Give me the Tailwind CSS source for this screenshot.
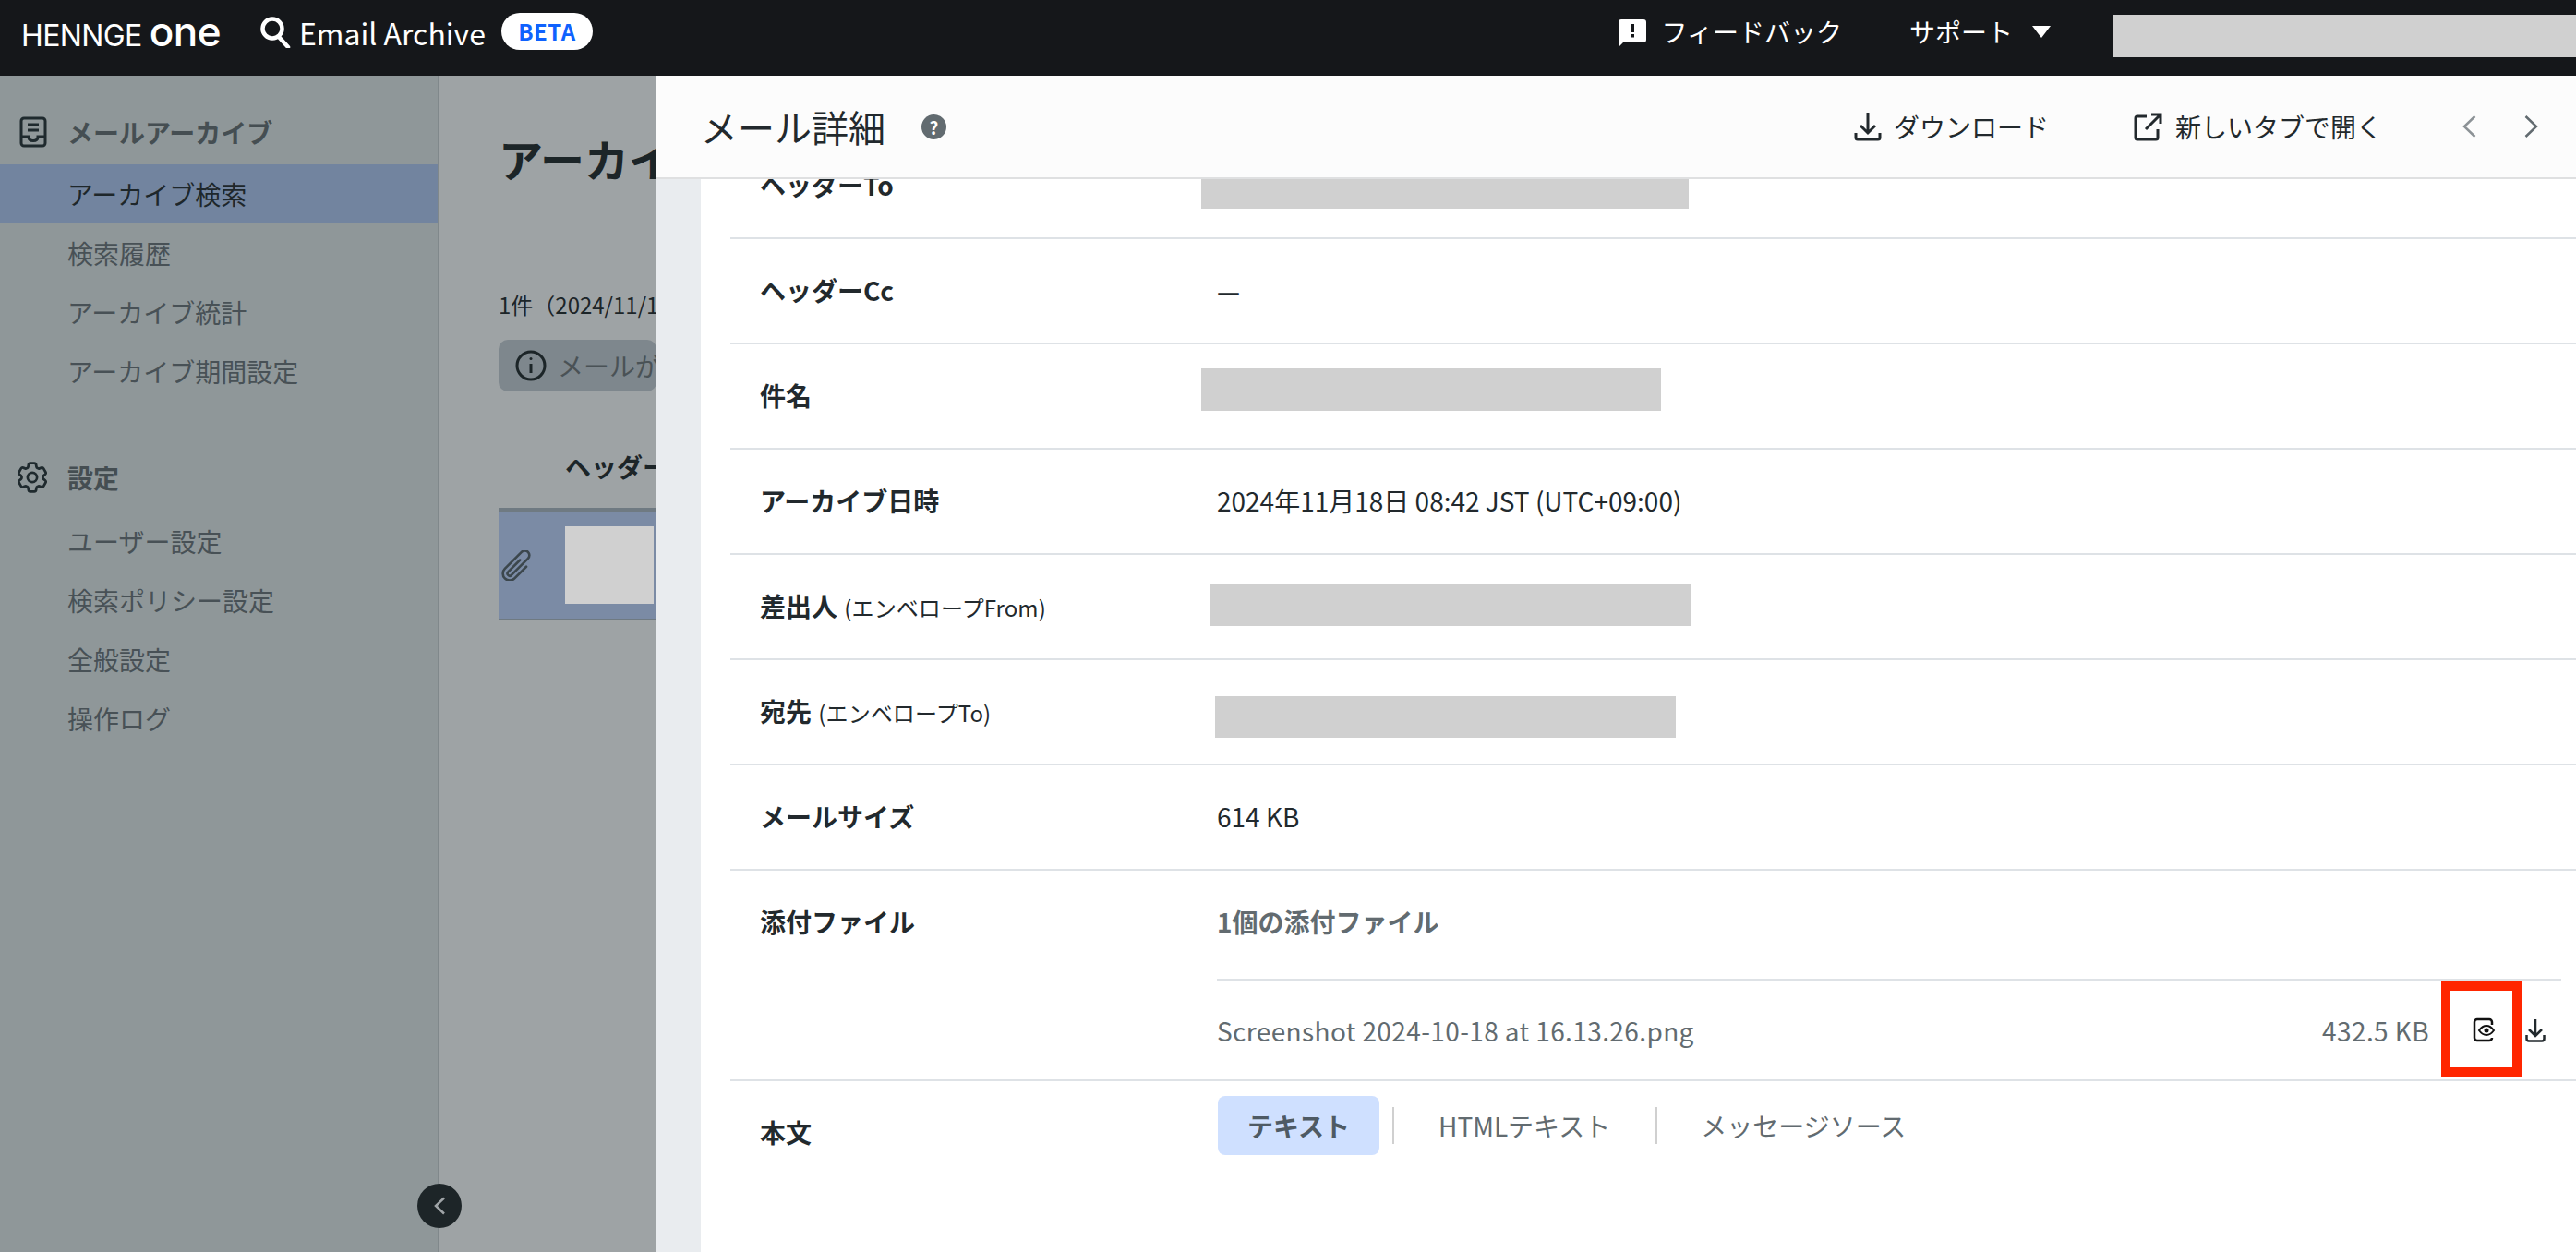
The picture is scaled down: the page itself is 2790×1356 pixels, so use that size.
<!DOCTYPE html>
<html lang="ja">

<head>
  <meta charset="UTF-8">
  <meta name="viewport" content="width=device-width, initial-scale=1.0">
  <script src="https://cdn.jsdelivr.net/npm/@tailwindcss/browser@4"></script>
  <title>Email Archive</title>
</head>

<body class="w-[2790px] h-[1356px] overflow-hidden bg-[#9ea3a5] font-['Noto_Sans_CJK_JP','Noto_Sans',sans-serif] text-[28px] text-[#22292d]">

  <!-- top bar -->
  <header class="h-[82px] bg-[#15171a] flex items-start text-white">
    <div class="w-[258px] pl-[23px] pt-[10px] h-[68px] flex items-baseline whitespace-nowrap font-['Inter',sans-serif] leading-[48px]">
      <span class="text-[32px] tracking-[-0.6px]">HENNGE</span>
      <span class="text-[44px] ml-[8px] font-medium tracking-[-0.5px]">one</span>
    </div>
    <svg class="w-[34px] h-[35px] mt-[17px] ml-[23px]" viewBox="0 0 34 35" fill="none" stroke="#fff" stroke-width="4.500"><circle cx="14" cy="14" r="10.500"/><path d="M21 23l10 11" stroke-linecap="round"/></svg>
    <span class="ml-[9px] mt-[14px] text-[32px] leading-[42px] whitespace-nowrap">Email Archive</span>
    <span class="ml-[17px] mt-[14px] w-[99px] h-[40px] rounded-full bg-white text-[#0f62fe] text-[24px] font-bold flex items-center justify-center tracking-[0.5px]">BETA</span>
    <div class="ml-auto flex items-center h-[68px]">
      <svg class="w-[30px] h-[30px] mt-[4px]" viewBox="0 0 30 30"><path fill="#fff" d="M3 0h24a3 3 0 0 1 3 3v19a3 3 0 0 1-3 3H5l-5 5V3a3 3 0 0 1 3-3z"/><rect x="13.500" y="5" width="3.500" height="9" fill="#15171a"/><rect x="13.500" y="16" width="3.500" height="3.500" fill="#15171a"/></svg>
      <span class="ml-[17px] whitespace-nowrap">フィードバック</span>
      <span class="ml-[73px] whitespace-nowrap">サポート</span>
      <svg class="ml-[21px] w-[20px] h-[13px]" viewBox="0 0 20 13"><path fill="#fff" d="M0 0h20L10 13z"/></svg>
      <div class="ml-[68px] mt-[10px] w-[501px] h-[46px] bg-[#d0d0d0]"></div>
    </div>
  </header>

  <div class="flex h-[1274px] relative">
    <!-- sidebar -->
    <aside class="w-[476px] shrink-0 bg-[#8f9799] border-r-2 border-[#80888b] pt-[29px] text-[#485156]">
      <div class="h-[67px] pb-[3px] flex items-center font-bold text-[#454e52]">
        <svg class="ml-[21px] mr-[22px] w-[30px] h-[34px]" viewBox="0 0 30 34" fill="none" stroke="#1f2a2e" stroke-width="3"><rect x="2" y="2" width="26" height="30" rx="3"/><path d="M9 9h12M9 15h12M2 22h8c0 3 2 4.500 5 4.500s5-1.500 5-4.500h8"/></svg>
        メールアーカイブ
      </div>
      <a class="h-16 flex items-center pl-[73px] bg-[#72849f] text-[#1e272b]">アーカイブ検索</a>
      <a class="h-16 flex items-center pl-[73px]">検索履歴</a>
      <a class="h-16 flex items-center pl-[73px]">アーカイブ統計</a>
      <a class="h-16 flex items-center pl-[73px]">アーカイブ期間設定</a>

      <div class="mt-[51px] h-[69px] pb-[5px] flex items-center font-bold text-[#454e52]">
        <svg class="ml-[18px] mr-[21px] w-[34px] h-[34px]" viewBox="2 2 20 20" fill="none" stroke="#1f2a2e" stroke-width="1.600"><path d="M9.594 3.940c.09-.542.56-.94 1.110-.94h2.593c.55 0 1.020.398 1.110.94l.213 1.281c.063.374.313.686.645.87.074.04.147.083.22.127.325.196.72.257 1.075.124l1.217-.456a1.125 1.125 0 0 1 1.370.49l1.296 2.247a1.125 1.125 0 0 1-.26 1.431l-1.003.827c-.293.241-.438.613-.43.992a7.723 7.723 0 0 1 0 .255c-.008.378.137.75.43.991l1.004.827c.424.35.534.955.26 1.430l-1.298 2.247a1.125 1.125 0 0 1-1.369.491l-1.217-.456c-.355-.133-.75-.072-1.076.124a6.470 6.470 0 0 1-.22.128c-.331.183-.581.495-.644.869l-.213 1.281c-.09.543-.56.94-1.110.94h-2.594c-.55 0-1.019-.398-1.110-.94l-.213-1.281c-.062-.374-.312-.686-.644-.87a6.520 6.520 0 0 1-.22-.127c-.325-.196-.72-.257-1.076-.124l-1.217.456a1.125 1.125 0 0 1-1.369-.49l-1.297-2.247a1.125 1.125 0 0 1 .26-1.431l1.004-.827c.292-.24.437-.613.43-.991a6.932 6.932 0 0 1 0-.255c.007-.38-.138-.751-.43-.992l-1.004-.827a1.125 1.125 0 0 1-.26-1.430l1.297-2.247a1.125 1.125 0 0 1 1.370-.491l1.216.456c.356.133.751.072 1.076-.124.072-.044.146-.086.22-.128.332-.183.582-.495.644-.869l.214-1.280Z"/><circle cx="12" cy="12" r="3"/></svg>
        設定
      </div>
      <a class="h-16 flex items-center pl-[73px]">ユーザー設定</a>
      <a class="h-16 flex items-center pl-[73px]">検索ポリシー設定</a>
      <a class="h-16 flex items-center pl-[73px]">全般設定</a>
      <a class="h-16 flex items-center pl-[73px]">操作ログ</a>
    </aside>

    <!-- page behind the drawer -->
    <main class="w-[235px] shrink-0 pl-[64px] whitespace-nowrap overflow-hidden">
      <h1 class="mt-[53px] text-[48px] leading-[72px] font-bold text-[#1c2528]">アーカイブ検索</h1>
      <p class="mt-[105px] text-[24px] leading-[36px] text-[#1c2528]">1件（2024/11/18 08:42）</p>
      <div class="mt-[20px] h-[56px] bg-[#7e878d] rounded-[10px] flex items-center pl-[18px] text-[#4a5256]">
        <svg class="w-[34px] h-[34px] mr-[12px] shrink-0" viewBox="0 0 34 34" fill="none" stroke="#1c2528" stroke-width="3"><circle cx="17" cy="17" r="15"/><path d="M17 15v10"/><circle cx="17" cy="9.500" r="1.500" fill="#1c2528" stroke="none"/></svg>
        <span class="shrink-0">メールが見つかりました</span>
      </div>
      <div class="mt-[60px] pl-[72px] font-bold text-[#1c2528] leading-[42px]">ヘッダーFrom</div>
      <div class="mt-[24px] h-[122px] bg-[#7b8ba5] border-t-4 border-b-2 border-[#6f7a82] flex items-center pl-[3px]">
        <svg class="w-[33px] h-[33px] shrink-0" viewBox="3 2 18 20" fill="none" stroke="#3c474d" stroke-width="1.600" stroke-linecap="round"><path d="m18.375 12.739-7.693 7.693a4.500 4.500 0 0 1-6.364-6.364l10.940-10.940A3 3 0 1 1 19.500 7.372L8.552 18.320m.009-.01-.01.01m5.699-9.941-7.810 7.810a1.500 1.500 0 0 0 2.112 2.130"/></svg>
        <div class="ml-[36px] w-[96px] h-[84px] shrink-0 bg-[#d0d0d0]"></div>
        <div class="ml-[2px] text-[24px] leading-[42px] text-[#1c2528] shrink-0">T<br>C</div>
      </div>
    </main>

    <button class="absolute left-[452px] top-[1200px] w-[48px] h-[48px] rounded-full bg-[#1d2528] flex items-center justify-center">
      <svg class="w-[12px] h-[20px]" viewBox="0 0 12 20" fill="none" stroke="#a0a5a8" stroke-width="2.500"><path d="M11 1.500 2 10l9 8.500"/></svg>
    </button>

    <!-- drawer -->
    <section class="absolute left-[711px] top-0 w-[2079px] h-full bg-[#e9ecef] flex flex-col">
      <div class="relative z-10 h-[112px] shrink-0 bg-[#fcfcfc] border-b-2 border-[#dfe0e1] flex items-center pl-[48px]">
        <h2 class="text-[40px] leading-[60px]">メール詳細</h2>
        <span class="ml-[39px] w-[27px] h-[27px] rounded-full bg-[#626b70] text-white text-[19px] font-bold flex items-center justify-center leading-none">?</span>
        <svg class="ml-auto w-[30px] h-[32px]" viewBox="0 0 30 32" fill="none" stroke="#22292d" stroke-width="3"><path d="M15 1v21M7 15l8 8 8-8M2 23v5a2 2 0 0 0 2 2h22a2 2 0 0 0 2-2v-5"/></svg>
        <span class="ml-[13px] whitespace-nowrap">ダウンロード</span>
        <svg class="ml-[92px] w-[31px] h-[31px]" viewBox="0 0 31 31" fill="none" stroke="#22292d" stroke-width="3"><path d="M14 4H4a2 2 0 0 0-2 2v21a2 2 0 0 0 2 2h20a2 2 0 0 0 2-2V18M19 2h10v10M29 2 13 18"/></svg>
        <span class="ml-[14px] whitespace-nowrap">新しいタブで開く</span>
        <svg class="ml-[87px] w-[15px] h-[24px]" viewBox="0 0 15 24" fill="none" stroke="#8c9296" stroke-width="2.500"><path d="M13.500 1 2 12l11.500 11"/></svg>
        <svg class="ml-[52px] mr-[41px] w-[15px] h-[24px]" viewBox="0 0 15 24" fill="none" stroke="#626b70" stroke-width="2.500"><path d="M1.500 1 13 12 1.500 23"/></svg>
      </div>

      <div class="ml-[48px] flex-1 bg-white pl-[32px] overflow-hidden">
        <div class="-mt-[49px]">
          <div class="h-[114px] pb-[2px] border-b-2 border-[#dee2e6] flex items-center">
            <div class="w-[527px] shrink-0 pl-[32px] font-bold">ヘッダーTo</div>
            <div class="w-[528px] h-[32px] bg-[#d0d0d0] self-start mt-[49px] -ml-[17px]"></div>
          </div>
          <div class="h-[114px] pb-[2px] border-b-2 border-[#dee2e6] flex items-center">
            <div class="w-[527px] shrink-0 pl-[32px] font-bold">ヘッダーCc</div>
            <div>—</div>
          </div>
          <div class="h-[114px] pb-[2px] border-b-2 border-[#dee2e6] flex items-center">
            <div class="w-[527px] shrink-0 pl-[32px] font-bold">件名</div>
            <div class="w-[498px] h-[46px] bg-[#d0d0d0] -ml-[17px] -mt-[12px]"></div>
          </div>
          <div class="h-[114px] pb-[2px] border-b-2 border-[#dee2e6] flex items-center">
            <div class="w-[527px] shrink-0 pl-[32px] font-bold">アーカイブ日時</div>
            <div>2024年11月18日 08:42 JST (UTC+09:00)</div>
          </div>
          <div class="h-[114px] pb-[2px] border-b-2 border-[#dee2e6] flex items-center">
            <div class="w-[527px] shrink-0 pl-[32px] font-bold">差出人 <span class="ml-[1px] text-[24px] font-normal tracking-[0.1px]">(エンベロープFrom)</span></div>
            <div class="w-[520px] h-[45px] bg-[#d0d0d0] -ml-[7px] -mt-[2px]"></div>
          </div>
          <div class="h-[114px] pb-[2px] border-b-2 border-[#dee2e6] flex items-center">
            <div class="w-[527px] shrink-0 pl-[32px] font-bold">宛先 <span class="ml-[1px] text-[24px] font-normal tracking-[0.1px]">(エンベロープTo)</span></div>
            <div class="w-[499px] h-[45px] bg-[#d0d0d0] -ml-[2px] mt-[12px]"></div>
          </div>
          <div class="h-[114px] pb-[2px] border-b-2 border-[#dee2e6] flex items-center">
            <div class="w-[527px] shrink-0 pl-[32px] font-bold">メールサイズ</div>
            <div>614 KB</div>
          </div>
          <div class="h-[228px] border-b-2 border-[#dee2e6] flex">
            <div class="w-[527px] shrink-0 pl-[32px] pt-[34px] font-bold">添付ファイル</div>
            <div class="flex-1 text-[#626b70]">
              <div class="h-[119px] mr-[16px] border-b-2 border-[#dee2e6] pt-[34px] font-bold">1個の添付ファイル</div>
              <div class="h-[107px] flex items-center">
                <span class="tracking-[0.4px]">Screenshot 2024-10-18 at 16.13.26.png</span>
                <span class="ml-auto tracking-[0.4px]">432.5 KB</span>
                <span class="relative w-[25px] h-[27px] ml-[47px]">
                  <svg class="w-[25px] h-[27px]" viewBox="0 0 25 27" fill="none" stroke="#111" stroke-width="2.500"><path d="M21 8V5a3 3 0 0 0-3-3H5a3 3 0 0 0-3 3v17a3 3 0 0 0 3 3h13a3 3 0 0 0 3-3"/><path d="M7 14c2.500-3.500 5-5 8-5s5.500 1.500 8 5c-2.500 3.500-5 5-8 5s-5.500-1.500-8-5z" stroke-width="2"/><circle cx="15" cy="14" r="2.500" fill="#111" stroke="none"/></svg>
                  <span class="absolute -left-[34px] -top-[39px] w-[87px] h-[103px] border-[10px] border-[#ff2600]"></span>
                </span>
                <svg class="ml-[32px] mr-[33px] w-[22px] h-[26px]" viewBox="0 0 22 26" fill="none" stroke="#22292d" stroke-width="2.500"><path d="M11 1v17M4 12l7 7 7-7M1.500 18v4a2.500 2.500 0 0 0 2.500 2.500h14a2.500 2.500 0 0 0 2.500-2.500v-4"/></svg>
              </div>
            </div>
          </div>
          <div class="flex">
            <div class="w-[527px] shrink-0 pl-[32px] pt-[34px] font-bold">本文</div>
            <div class="pt-[15px] flex items-center text-[#626b70] h-[80px]">
              <span class="ml-[1px] w-[175px] h-[64px] rounded-[8px] bg-[#cfe0ff] text-[#4e5a64] font-bold flex items-center justify-center">テキスト</span>
              <span class="ml-[14px] w-[2px] h-[40px] bg-[#d0d0d0]"></span>
              <span class="ml-[48px]">HTMLテキスト</span>
              <span class="ml-[49px] w-[2px] h-[40px] bg-[#d0d0d0]"></span>
              <span class="ml-[47px]">メッセージソース</span>
            </div>
          </div>
        </div>
      </div>
    </section>
  </div>

</body>

</html>
